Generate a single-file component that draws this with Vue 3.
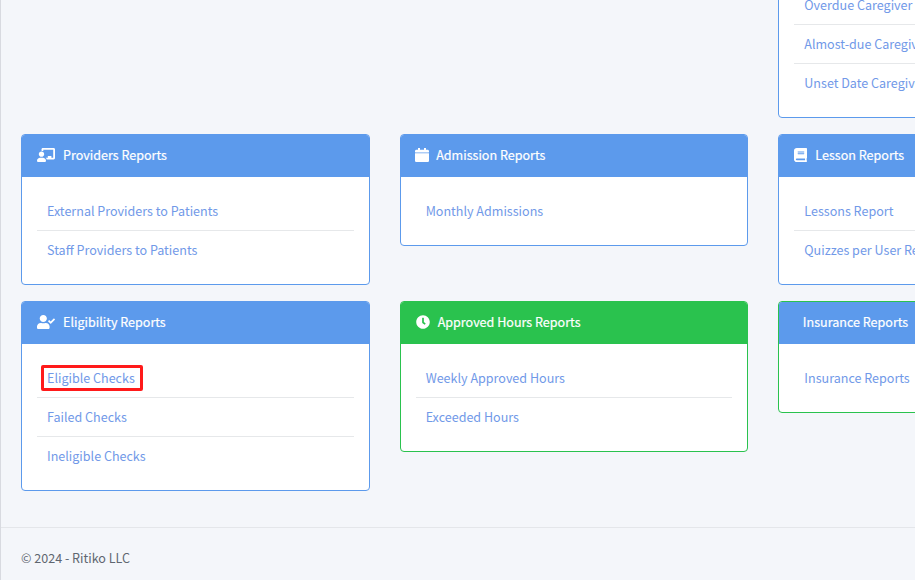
<script setup>
const icons = {
  teacher: { vb: '0 0 640 512', cls: 'i-wide', d: 'M208 352c-2.39 0-4.78.35-7.06 1.09C187.98 357.3 174.35 360 160 360c-14.35 0-27.98-2.7-40.95-6.91-2.28-.74-4.66-1.09-7.05-1.09C49.94 352-.33 402.48 0 464.62.14 490.88 21.73 512 48 512h224c26.27 0 47.86-21.12 48-47.38.33-62.14-49.94-112.62-112-112.62zm-48-32c53.02 0 96-42.98 96-96s-42.98-96-96-96-96 42.98-96 96 42.98 96 96 96zM592 0H208c-26.47 0-48 22.25-48 49.59V96c23.42 0 45.1 6.78 64 17.8V64h352v288h-64v-64H384v64h-76.24c19.1 16.69 33.12 38.73 39.69 64H592c26.47 0 48-22.25 48-49.59V49.59C640 22.25 618.47 0 592 0z' },
  userCheck: { vb: '0 0 640 512', cls: 'i-wide', d: 'M224 256c70.7 0 128-57.3 128-128S294.7 0 224 0 96 57.3 96 128s57.3 128 128 128zm89.6 32h-16.7c-22.2 10.2-46.9 16-72.9 16s-50.6-5.8-72.9-16h-16.7C60.2 288 0 348.2 0 422.4V464c0 26.5 21.5 48 48 48h352c26.5 0 48-21.5 48-48v-41.6c0-74.2-60.2-134.4-134.4-134.4zm323-128.4l-27.8-28.1c-4.6-4.7-12.1-4.7-16.8-.1l-104.8 104-45.5-45.8c-4.6-4.7-12.1-4.7-16.8-.1l-28.1 27.9c-4.7 4.6-4.7 12.1-.1 16.8l81.7 82.3c4.6 4.7 12.1 4.7 16.8.1l141.3-140.2c4.6-4.7 4.7-12.2.1-16.8z' },
  calendar: { vb: '0 0 448 512', cls: 'i-cal', d: 'M12 192h424c6.6 0 12 5.4 12 12v260c0 26.5-21.5 48-48 48H48c-26.5 0-48-21.5-48-48V204c0-6.6 5.4-12 12-12zm436-44v-36c0-26.5-21.5-48-48-48h-48V12c0-6.6-5.4-12-12-12h-40c-6.6 0-12 5.4-12 12v52H160V12c0-6.6-5.4-12-12-12h-40c-6.6 0-12 5.4-12 12v52H48C21.5 64 0 85.5 0 112v36c0 6.6 5.4 12 12 12h424c6.6 0 12-5.4 12-12z' },
  clock: { vb: '0 0 512 512', cls: 'i-clock', d: 'M256,8C119,8,8,119,8,256S119,504,256,504,504,393,504,256,393,8,256,8Zm92.49,313h0l-20,25a16,16,0,0,1-22.49,2.5h0l-67-49.72a40,40,0,0,1-15-31.23V112a16,16,0,0,1,16-16h32a16,16,0,0,1,16,16V256l58,42.5A16,16,0,0,1,348.49,321Z' },
  book: { vb: '0 0 448 512', cls: 'i-book', d: 'M448 360V24c0-13.3-10.7-24-24-24H96C43 0 0 43 0 96v320c0 53 43 96 96 96h328c13.3 0 24-10.7 24-24v-16c0-7.5-3.5-14.3-8.9-18.7-4.2-15.4-4.2-59.3 0-74.7 5.4-4.3 8.9-11.1 8.9-18.6zM128 134c0-3.3 2.7-6 6-6h212c3.3 0 6 2.7 6 6v20c0 3.3-2.7 6-6 6H134c-3.3 0-6-2.7-6-6v-20zm0 64c0-3.3 2.7-6 6-6h212c3.3 0 6 2.7 6 6v20c0 3.3-2.7 6-6 6H134c-3.3 0-6-2.7-6-6v-20zm253.4 250H96c-17.7 0-32-14.3-32-32 0-17.6 14.4-32 32-32h285.4c-1.9 17.1-1.9 46.9 0 64z' }
}

const cards = [
  { title: 'Caregiver Reports', col: 'c3', links: ['Overdue Caregiver Reports', 'Almost-due Caregiver Reports', 'Unset Date Caregiver Reports'] },
  { title: 'Providers Reports', icon: 'teacher', links: ['External Providers to Patients', 'Staff Providers to Patients'] },
  { title: 'Admission Reports', icon: 'calendar', links: ['Monthly Admissions'] },
  { title: 'Lesson Reports', icon: 'book', links: ['Lessons Report', 'Quizzes per User Report'] },
  { title: 'Eligibility Reports', icon: 'userCheck', links: ['Eligible Checks', 'Failed Checks', 'Ineligible Checks'], mark: 'Eligible Checks' },
  { title: 'Approved Hours Reports', icon: 'clock', green: true, links: ['Weekly Approved Hours', 'Exceeded Hours'] },
  { title: 'Insurance Reports', border: true, plain: true, links: ['Insurance Reports'] }
]
</script>

<template>
  <div class="page">
    <main class="content">
      <section
        v-for="card in cards"
        :key="card.title"
        class="card"
        :class="[card.col, { green: card.green, 'green-border': card.border }]"
      >
        <header class="head" :class="{ plain: card.plain }">
          <svg v-if="card.icon" class="icon" :class="icons[card.icon].cls" :viewBox="icons[card.icon].vb" preserveAspectRatio="none" aria-hidden="true">
            <path :d="icons[card.icon].d" fill="currentColor" />
          </svg>
          <span class="title">{{ card.title }}</span>
        </header>
        <ul class="list">
          <li v-for="link in card.links" :key="link" class="item">
            <a class="link" :class="{ mark: link === card.mark }">{{ link }}</a>
          </li>
        </ul>
      </section>
    </main>
    <footer class="foot">© 2024 - Ritiko LLC</footer>
  </div>
</template>

<style>
html, body { margin: 0; overflow: hidden; background: #f4f6fa; }
</style>

<style scoped>
.page {
  height: 580px;
  width: 915px;
  box-sizing: border-box;
  overflow: hidden;
  display: flex;
  flex-direction: column;
  justify-content: flex-end;
  border-left: 1px solid #d8dae0;
  background: #f4f6fa;
  font-family: "Noto Sans CJK SC", "Noto Sans", sans-serif;
  font-size: 12.55px;
  line-height: 20px;
}
.content {
  flex: none;
  display: grid;
  grid-template-columns: repeat(3, 348.67px);
  column-gap: 30px;
  row-gap: 16px;
  align-items: start;
  padding: 0 0 36px 20px;
}
.card {
  box-sizing: border-box;
  background: #fff;
  border: 1px solid #5c9aec;
  border-radius: 4px;
  overflow: hidden;
}
.c3 { grid-column: 3; }
.green-border { border-color: #2ac24e; }
.green { border-color: #2ac24e; }
.head {
  height: 42px;
  display: flex;
  align-items: center;
  padding: 0 15px;
  background: #5c9aec;
  color: #fff;
}
.title { margin-bottom: 2px; -webkit-text-stroke: 0.2px #fff; }
.green .head { background: #2ac24e; }
.head.plain { padding-left: 23.5px; }
.icon { flex: none; display: block; margin-bottom: 2px; }
.i-wide { width: 18px; height: 14px; margin-right: 8px; }
.i-cal { width: 14px; height: 14px; margin-right: 7px; margin-left: -0.5px; }
.i-clock { width: 14px; height: 14px; margin-right: 8px; }
.i-book { width: 13px; height: 14px; margin-right: 8px; }
.list {
  list-style: none;
  margin: 0;
  padding: 15px;
}
.item {
  padding: 9px 10px;
  border-bottom: 1px solid #e6e8ea;
  white-space: nowrap;
}
.item:last-child { border-bottom: 0; }
.link {
  position: relative;
  color: #7199e8;
}
.mark::after {
  content: "";
  position: absolute;
  left: -6px;
  right: -8px;
  top: -3px;
  bottom: -4px;
  border: 3px solid #ff1a1a;
  border-radius: 2px;
}
.foot {
  flex: none;
  height: 53px;
  box-sizing: border-box;
  border-top: 1px solid #e4e6ea;
  padding: 20px 20px 0;
  color: #5f6670;
}
</style>
